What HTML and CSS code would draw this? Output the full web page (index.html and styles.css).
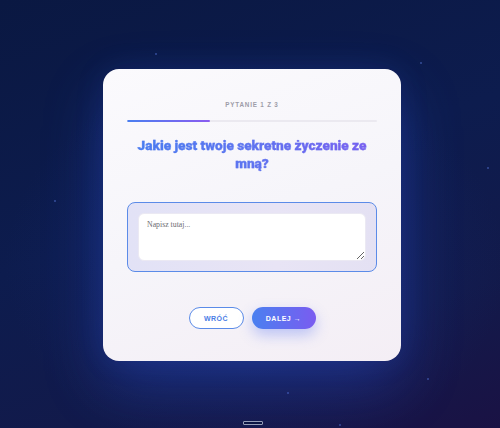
FILE: index.html
```html
<!DOCTYPE html>
<html lang="pl">
<head>
<meta charset="utf-8">
<title>Pytanie 1 z 3</title>
<link rel="stylesheet" href="styles.css">
</head>
<body>
<div class="stars">
  <span class="star" style="left:420px;top:62px"></span>
  <span class="star" style="left:54px;top:200px"></span>
  <span class="star" style="left:155px;top:53px"></span>
  <span class="star" style="left:487px;top:167px"></span>
  <span class="star" style="left:287px;top:392px"></span>
  <span class="star" style="left:339px;top:424px"></span>
  <span class="star" style="left:427px;top:378px"></span>
</div>
<main class="stage">
  <section class="card">
    <div class="step">PYTANIE 1 Z 3</div>
    <div class="progress"><div class="progress-fill" style="width:33%"></div></div>
    <h1 class="question">Jakie jest twoje sekretne życzenie ze mną?</h1>
    <div class="answer">
      <textarea class="answer-input" placeholder="Napisz tutaj..."></textarea>
    </div>
    <div class="actions">
      <button class="btn btn-back">WRÓĆ</button>
      <button class="btn btn-next">DALEJ →</button>
    </div>
  </section>
</main>
<div class="home-indicator"></div>
</body>
</html>
```

FILE: styles.css
```css
html, body {
  margin: 0;
  padding: 0;
  height: 100%;
}
body {
  font-family: "Liberation Sans", Arial, sans-serif;
  background:
    radial-gradient(ellipse 250px 200px at 51% 62%, rgba(40, 70, 170, 0.45) 0%, rgba(25, 45, 120, 0.2) 55%, rgba(12, 26, 72, 0) 100%),
    linear-gradient(160deg, #0a1842 0%, #0d1c4e 45%, #121a4b 75%, #1a1244 100%);
  overflow: hidden;
  position: relative;
}
.stars {
  position: absolute;
  inset: 0;
  pointer-events: none;
}
.star {
  position: absolute;
  width: 2px;
  height: 2px;
  border-radius: 50%;
  background: rgba(90, 120, 220, 0.55);
}
.stage {
  height: 100%;
  box-sizing: border-box;
  padding: 2px 0 0 4px;
  display: flex;
  align-items: center;
  justify-content: center;
}
.card {
  width: 298px;
  box-sizing: border-box;
  padding: 31px 24px 32px;
  border-radius: 16px;
  background: linear-gradient(160deg, #fbfafd 0%, #f6f5fa 50%, #f4eef5 100%);
  box-shadow: 0 24px 60px rgba(50, 90, 230, 0.32), 0 0 30px rgba(50, 90, 230, 0.12);
  display: flex;
  flex-direction: column;
  position: relative;
  z-index: 1;
}
.step {
  font-size: 6.3px;
  line-height: 10px;
  letter-spacing: 0.8px;
  font-weight: 600;
  color: #9d9ca8;
  text-align: center;
}
.progress {
  margin-top: 10px;
  height: 2px;
  border-radius: 2px;
  background: #ebe9f0;
  overflow: hidden;
}
.progress-fill {
  height: 100%;
  border-radius: 2px;
  background: linear-gradient(90deg, #4a7ff0, #8a5cf0);
}
.question {
  margin: 14px 0 0;
  font-family: Roboto, "Liberation Sans", sans-serif;
  font-weight: 900;
  font-size: 13.6px;
  line-height: 18px;
  text-align: center;
  color: #6172ef;
  background: linear-gradient(90deg, #467ff0 0%, #5f74f0 50%, #7e5cf0 100%);
  -webkit-background-clip: text;
  background-clip: text;
  -webkit-text-fill-color: transparent;
  -webkit-text-stroke: 0.3px rgba(92, 116, 240, 0.5);
  padding: 0 4px;
}
.answer {
  margin-top: 30px;
  border: 1.5px solid #5b8be8;
  border-radius: 8px;
  background: linear-gradient(90deg, #e2e2f6 0%, #e8e4f5 60%, #e4e1f3 100%);
  padding: 10px;
  display: flex;
}
.answer-input {
  flex: 1;
  height: 48px;
  box-sizing: border-box;
  border: 1px solid #ebe9f3;
  border-radius: 6px;
  background: #ffffff;
  padding: 6px 8px;
  font-family: "Liberation Serif", serif;
  font-size: 7.8px;
  color: #555;
  outline: none;
}
.answer-input::placeholder {
  color: #6c6c72;
}
.actions {
  margin-top: 35px;
  display: flex;
  justify-content: center;
  gap: 8px;
}
.btn {
  height: 22px;
  box-sizing: border-box;
  border-radius: 11px;
  padding: 0;
  font-family: "Liberation Sans", Arial, sans-serif;
  font-weight: 700;
  font-size: 7px;
  letter-spacing: 0.5px;
  cursor: pointer;
}
.btn-back {
  width: 55px;
  border: 1.5px solid #5b8be8;
  background: #ffffff;
  color: #4a7de6;
}
.btn-next {
  width: 64px;
  border: none;
  color: #ffffff;
  background: linear-gradient(90deg, #4a80f0 0%, #7a5cf0 100%);
  box-shadow: 0 6px 14px rgba(80, 110, 240, 0.35);
}
.home-indicator {
  position: absolute;
  left: 243px;
  top: 421px;
  width: 20px;
  height: 4px;
  box-sizing: border-box;
  border: 1px solid #9aa0b8;
  border-radius: 1px;
  background: #0c1440;
}
```
